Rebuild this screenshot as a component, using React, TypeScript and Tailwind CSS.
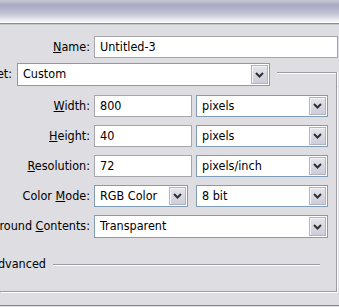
import React from 'react';

const Chevron = () => (
    <svg width="9" height="6" viewBox="0 0 9 6" className="block">
        <path d="M1 1 L4.5 4.5 L8 1" fill="none" stroke="#303030" strokeWidth="2" />
    </svg>
);

const Select = ({ value, className }: { value: string; className: string }) => (
    <div className={`flex h-full bg-white border border-[#7f9db9] ${className}`}>
        <div className="flex-1 pl-[5px] flex items-center whitespace-nowrap overflow-hidden">{value}</div>
        <div className="w-[17px] my-px mr-px flex items-center justify-center border border-[#b2b2c2] bg-[linear-gradient(to_bottom,#e4e4ec,#cdcdda)] shadow-[inset_1px_1px_0_#f4f4f8]">
            <Chevron />
        </div>
    </div>
);

const Input = ({ value, className }: { value: string; className: string }) => (
    <div className={`h-full bg-white border border-[#a5a5ab] pl-[5px] flex items-center ${className}`}>{value}</div>
);

const Label = ({ children, w }: { children: React.ReactNode; w: string }) => (
    <div className={`${w} shrink-0 flex justify-end whitespace-nowrap`}>{children}</div>
);

export default function App() {
    return (
        <div className="w-[339px] h-[307px] overflow-hidden bg-[#dddde2] text-[12.5px] text-black font-['DejaVu_Sans_Condensed','DejaVu_Sans',sans-serif]">
            {/* title gradient */}
            <div className="h-[24px] bg-[linear-gradient(to_bottom,#c8c8d6_0px,#a9a9c1_5px,#c4c4d4_14px,#ffffff_23px)] border-b border-[#8a8aa2]" />
            <div className="h-px bg-[#c6c6ce]" />

            {/* Name */}
            <div className="mt-[11px] h-[22px] flex items-center">
                <Label w="w-[90px]"><span><span className="underline">N</span>ame:</span></Label>
                <Input value="Untitled-3" className="ml-[4px] flex-1 mr-px" />
            </div>

            {/* Preset / group box top */}
            <div className="mt-[5px] h-[23px] flex items-center">
                <Label w="w-[12px]"><span>Preset:</span></Label>
                <Select value="Custom" className="ml-[5px] w-[253px]" />
                <div className="ml-[7px] mr-[2px] flex-1 self-stretch mt-[9px] border-t border-r border-[#9c9ca4] shadow-[inset_0_1px_0_#fff,1px_0_0_#fff]" />
            </div>

            {/* group box body */}
            <div className="mr-[2px] border-r border-b border-[#9c9ca4] shadow-[1px_1px_0_#fff] pt-[9px] pb-[20px] flex flex-col">
                <div className="flex flex-col gap-[8px]">
                    <div className="h-[22px] flex items-center">
                        <Label w="w-[90px]"><span><span className="underline">W</span>idth:</span></Label>
                        <Input value="800" className="ml-[4px] w-[98px]" />
                        <Select value="pixels" className="ml-[4px] w-[132px]" />
                    </div>
                    <div className="h-[22px] flex items-center">
                        <Label w="w-[90px]"><span><span className="underline">H</span>eight:</span></Label>
                        <Input value="40" className="ml-[4px] w-[98px]" />
                        <Select value="pixels" className="ml-[4px] w-[132px]" />
                    </div>
                    <div className="h-[22px] flex items-center">
                        <Label w="w-[90px]"><span><span className="underline">R</span>esolution:</span></Label>
                        <Input value="72" className="ml-[4px] w-[98px]" />
                        <Select value="pixels/inch" className="ml-[4px] w-[132px]" />
                    </div>
                    <div className="h-[22px] flex items-center">
                        <Label w="w-[90px]"><span>Color <span className="underline">M</span>ode:</span></Label>
                        <Select value="RGB Color" className="ml-[4px] w-[94px]" />
                        <Select value="8 bit" className="ml-[8px] w-[132px]" />
                    </div>
                    <div className="h-[23px] flex items-center">
                        <Label w="w-[90px]"><span>Background <span className="underline">C</span>ontents:</span></Label>
                        <Select value="Transparent" className="ml-[4px] w-[234px]" />
                    </div>
                </div>

                {/* Advanced */}
                <div className="mt-[19px] h-[14px] flex items-center">
                    <Label w="w-[46px]"><span>Advanced</span></Label>
                    <div className="ml-[7px] mr-[16px] flex-1 border-t border-[#9c9ca4] shadow-[0_1px_0_#fff]" />
                </div>
            </div>

            <div className="h-[13px]" />
            <div className="h-px bg-[#86868e]" />
        </div>
    );
}
